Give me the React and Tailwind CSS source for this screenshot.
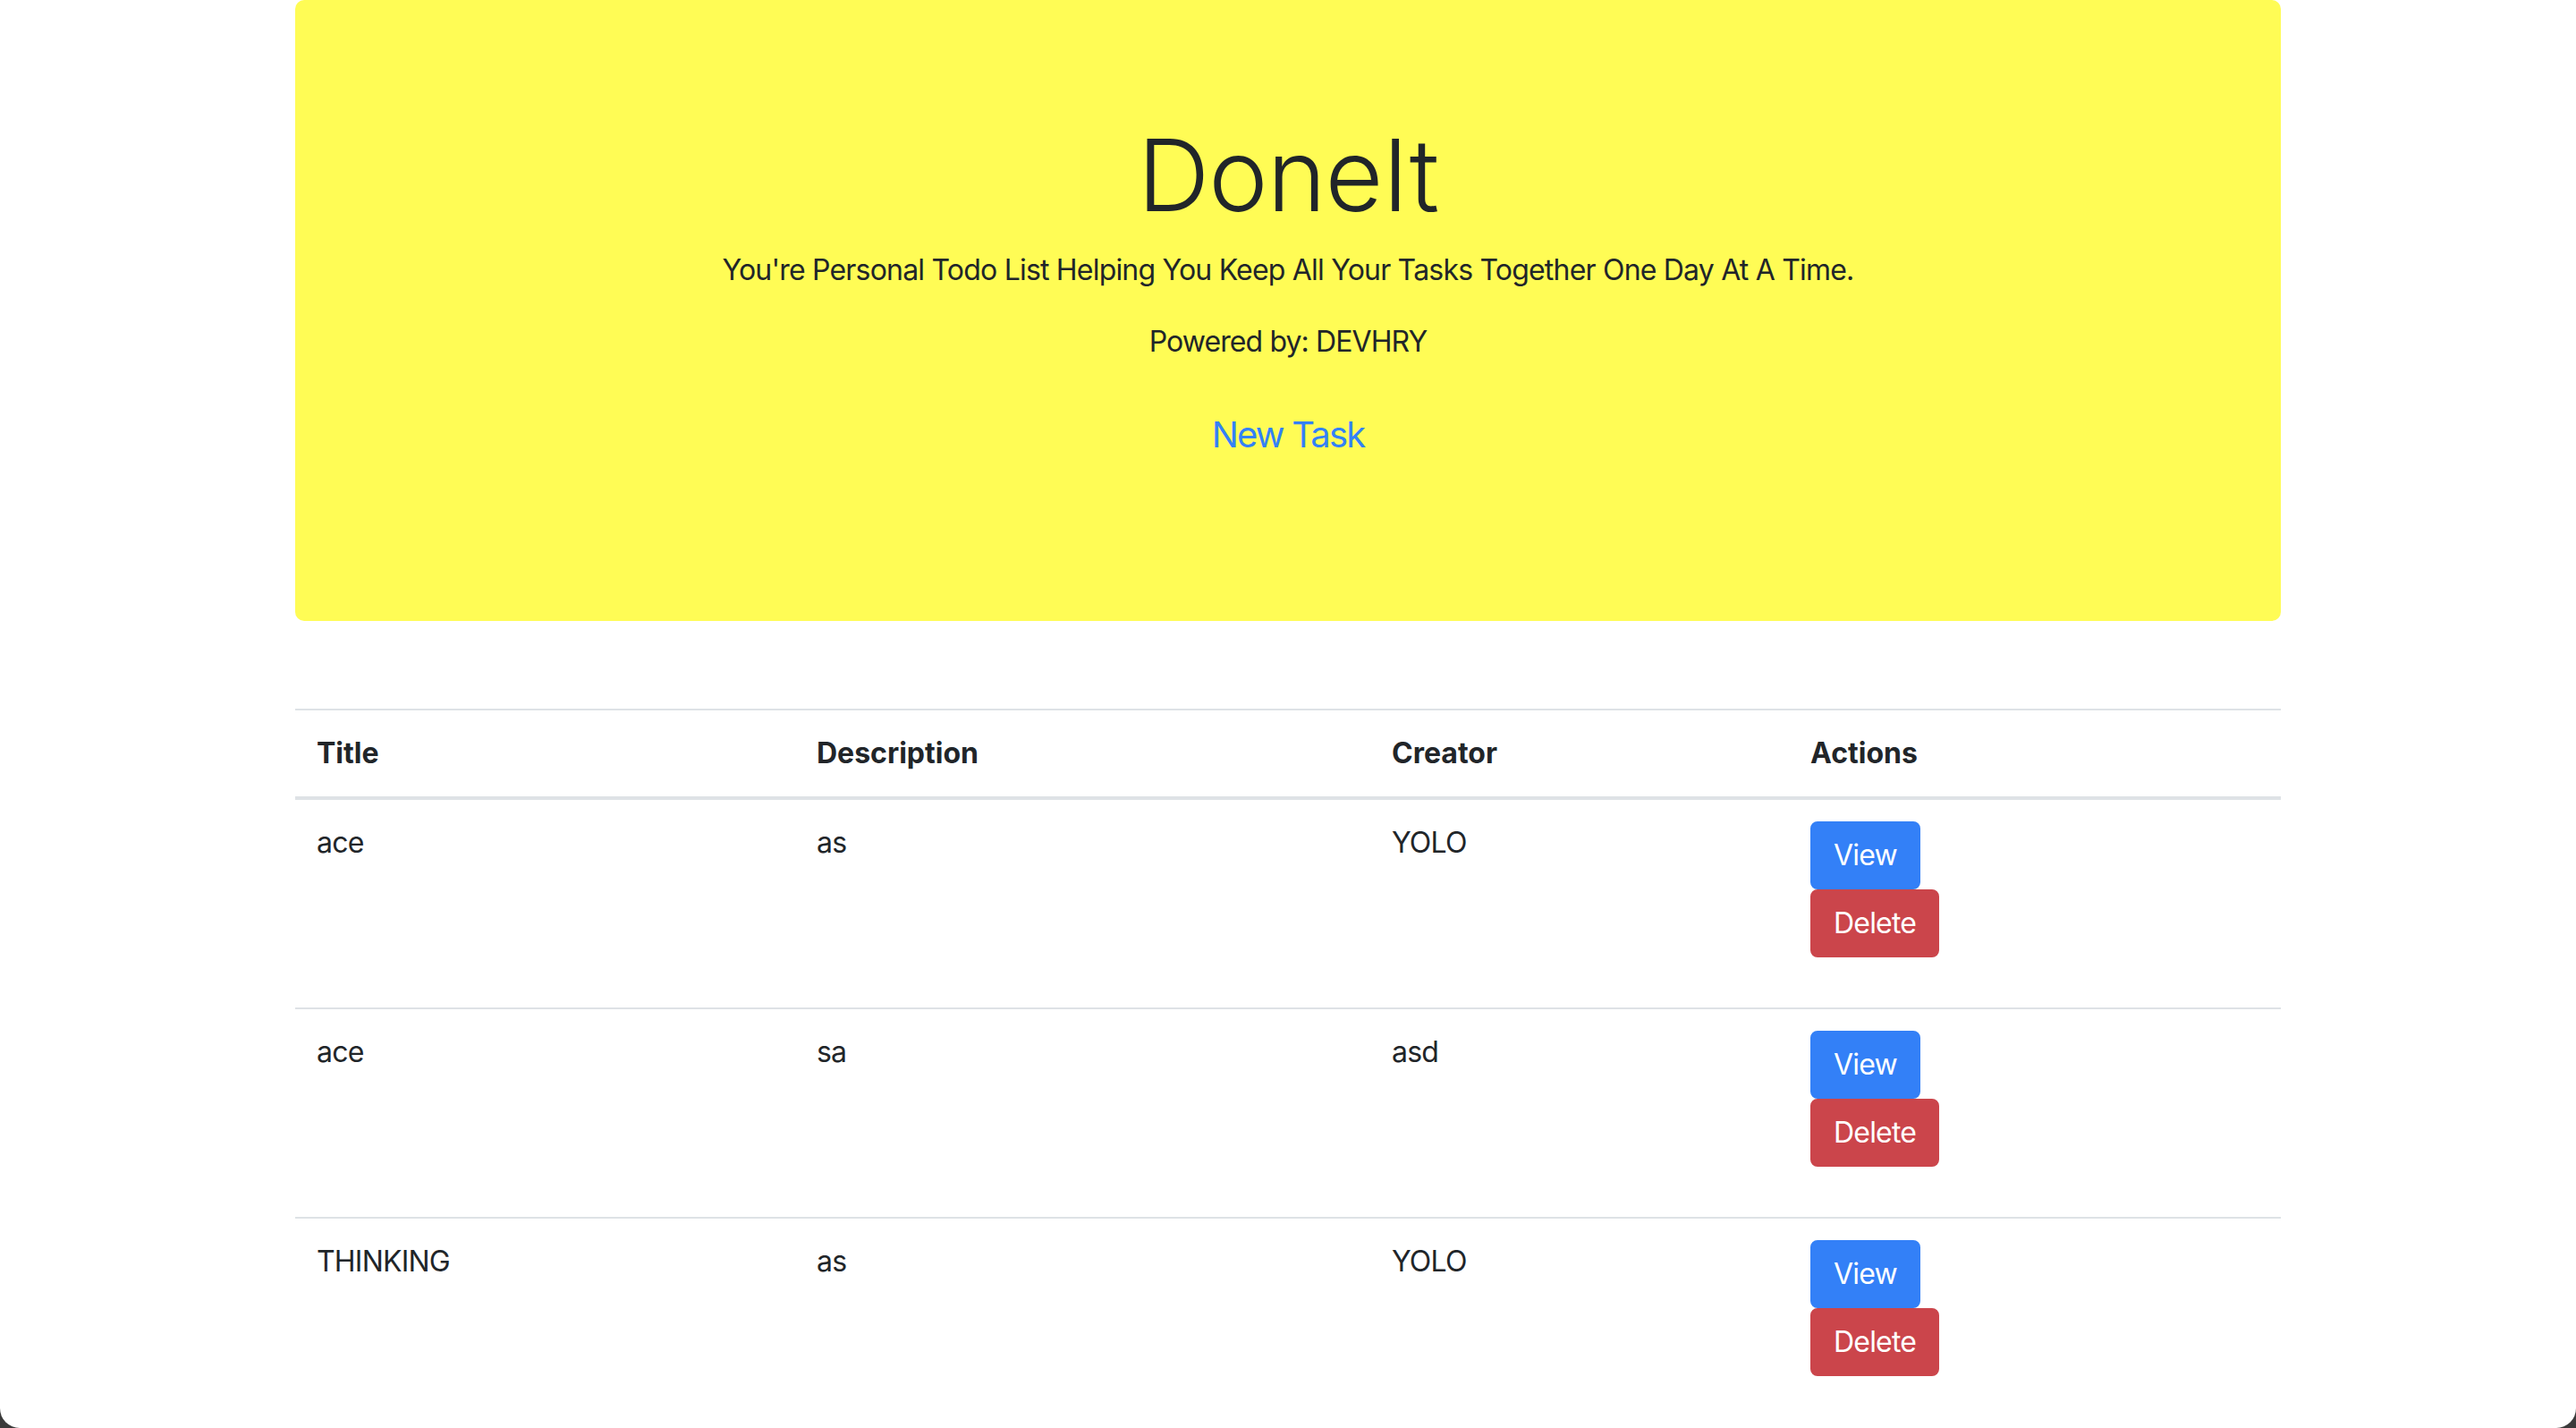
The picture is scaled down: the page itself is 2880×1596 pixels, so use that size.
const TASKS = [
  { title: 'ace', description: 'as', creator: 'YOLO' },
  { title: 'ace', description: 'sa', creator: 'asd' },
  { title: 'THINKING', description: 'as', creator: 'YOLO' },
];

const COLS = 'grid grid-cols-[559px_643px_468px_550px]';

function TaskRow({ task, first }) {
  return (
    <div className={`${COLS} tracking-[-0.8px] ${first ? '' : 'border-t-2 border-[#dee2e6]'}`}>
      <div className="px-[24px] py-[24px]">{task.title}</div>
      <div className="px-[24px] py-[24px]">{task.description}</div>
      <div className="px-[24px] py-[24px]">{task.creator}</div>
      <div className="px-[24px] pt-[24px] pb-[56px] flex flex-col items-start">
        <button className="px-[24px] py-[12px] border-2 border-[#3380f7] bg-[#3380f7] text-white rounded-[8px] leading-[48px]">
          View
        </button>
        <button className="px-[24px] py-[12px] border-2 border-[#cb454b] bg-[#cb454b] text-white rounded-[8px] leading-[48px]">
          Delete
        </button>
      </div>
    </div>
  );
}

export default function App() {
  return (
    <div className="bg-[#3a3a3a] h-[1596px]">
      <div
        className="bg-white h-[1596px] rounded-b-[22px] overflow-hidden text-[#212529] text-[32px] leading-[48px]"
        style={{ fontFamily: 'Inter, "Noto Sans", sans-serif' }}
      >
        <div className="w-[2220px] mx-auto">
          {/* Jumbotron */}
          <div className="bg-[#fffc55] rounded-[10px] pt-[128px] pb-[128px] px-[64px] text-center">
            <h1 className="text-[112px] font-light leading-[134px] mb-[16px] tracking-[-1px]">DoneIt</h1>
            <p className="mb-[32px] tracking-[-0.8px]">
              You're Personal Todo List Helping You Keep All Your Tasks Together One Day At A Time.
            </p>
            <p className="mb-[32px] tracking-[-0.9px]">Powered by: DEVHRY</p>
            <p className="mb-[32px]">
              <a className="inline-block px-[32px] py-[16px] border-2 border-transparent text-[40px] leading-[60px] tracking-[-1.8px] text-[#3381f7]">
                New Task
              </a>
            </p>
          </div>

          {/* Task table */}
          <div className="mt-[98px]">
            <div className={`${COLS} border-t-2 border-b-4 border-[#dee2e6] font-bold`}>
              <div className="px-[24px] py-[24px]">Title</div>
              <div className="px-[24px] py-[24px]">Description</div>
              <div className="px-[24px] py-[24px]">Creator</div>
              <div className="px-[24px] py-[24px]">Actions</div>
            </div>
            {TASKS.map((t, i) => (
              <TaskRow key={i} task={t} first={i === 0} />
            ))}
          </div>
        </div>
      </div>
    </div>
  );
}
